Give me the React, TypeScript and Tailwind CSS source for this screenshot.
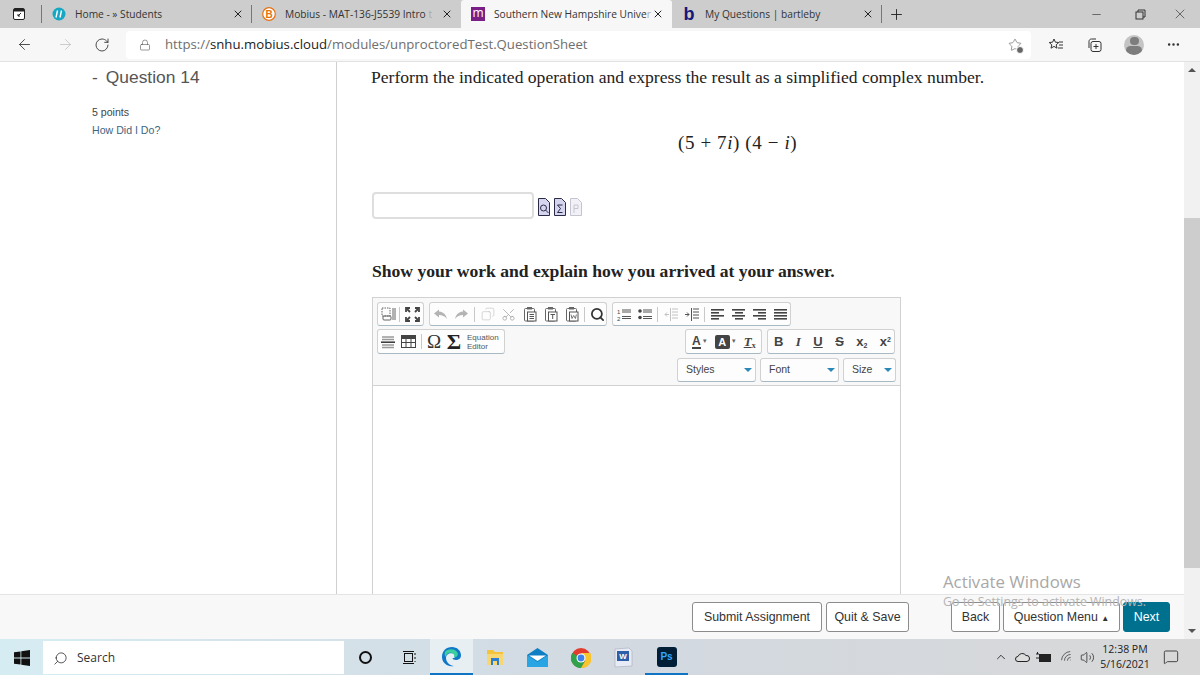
import React from "react";
import { ArrowLeft, ArrowRight, RotateCw, Lock, X, Plus, Minus, Star, MoreHorizontal, Search, Scissors, Copy, ChevronUp, Volume2, Wifi, MessageSquare } from "lucide-react";

const Tab = ({ w, icon, text, fade, active, sep }: { w: string; icon: React.ReactNode; text: string; fade?: string; active?: boolean; sep?: boolean }) => (
  <div className={`${w} h-[28px] flex items-center shrink-0 pl-[10px] pr-[8px] relative ${active ? "bg-[#f7f7f7] rounded-t-[3px]" : ""}`}>
    <span className="w-[14px] h-[14px] shrink-0 flex items-center justify-center mr-[9px]">{icon}</span>
    <span className="flex-1 whitespace-nowrap text-[10.2px] pt-[1px] text-[#333]">{text}{fade && <span className="text-[#aaa]">{fade}</span>}</span>
    <X size={12} strokeWidth={2} className="shrink-0 text-[#222]" />
    {sep && <span className="absolute right-0 top-[5px] w-px h-[18px] bg-[#777]" />}
  </div>
);

const Group = ({ w, tight, children }: { w: string; tight?: boolean; children: React.ReactNode }) => (
  <div className={`${w} ${tight ? "px-0" : "px-[3px]"} bg-[#fdfdfd] border border-[#d1d1d1] border-b-[#a9b9c4] rounded-[3px] flex items-center shrink-0`}>{children}</div>
);
const Sep = () => <span className="w-px h-[15px] bg-[#c8c8c8] mx-[2px] shrink-0" />;
const Cell = ({ children, w = "w-[21px]" }: { children: React.ReactNode; w?: string }) => (
  <span className={`${w} h-[20px] flex items-center justify-center shrink-0`}>{children}</span>
);
const Lines = ({ rows, c = "#444" }: { rows: [number, number][]; c?: string }) => (
  <svg width="14" height="13" viewBox="0 0 14 13">
    {rows.map(([x, w], i) => <rect key={i} x={x} y={1 + i * 3} width={w} height="1.6" fill={c} />)}
  </svg>
);
const Clip = ({ letter }: { letter?: string }) => (
  <svg width="14" height="16" viewBox="0 0 14 16" fill="none">
    <rect x="1.5" y="2.500" width="10" height="12.500" rx="1" stroke="#666" />
    <rect x="4" y="1" width="5" height="2.500" fill="#666" />
    <rect x="4.500" y="6" width="8.500" height="9" fill="#fff" stroke="#555" />
    {letter === "T" && <path d="M6.500 8.500h4.500M8.700 8.500v4.500" stroke="#555" />}
    {letter === "W" && <path d="M6 8.500l1 4 1.700-3 1.700 3 1-4" stroke="#555" strokeWidth=".8" />}
    {!letter && <path d="M6.500 8.500h4.500M6.500 10.500h4.500M6.500 12.500h4.500" stroke="#555" />}
  </svg>
);
const Dropdown = ({ w, label }: { w: string; label: string }) => (
  <div className={`${w} h-[24px] bg-[#fdfdfd] border border-[#d1d1d1] border-b-[#a9b9c4] rounded-[3px] flex items-center justify-between pl-[8px] pr-[3px] text-[10.5px] text-[#444] shrink-0`}>
    <span>{label}</span>
    <span className="w-0 h-0 border-l-[4px] border-r-[4px] border-t-[4px] border-l-transparent border-r-transparent border-t-[#2a87b8]" />
  </div>
);
const DocIcon = ({ children, faded }: { children: React.ReactNode; faded?: boolean }) => (
  <svg width="12" height="18" viewBox="0 0 12 18">
    <path d="M.5.500h7l4 4v13H.500z" fill={faded ? "#f1f1f7" : "#d5d5f0"} stroke={faded ? "#c5c5cf" : "#2b2b46"} />
    {children}
  </svg>
);
const Btn = ({ w, children, primary }: { w: string; children: React.ReactNode; primary?: boolean }) => (
  <button className={`${w} h-[30px] rounded-[3px] text-[12.4px] shrink-0 border ${primary ? "bg-[#00708f] border-[#00708f] text-white" : "bg-white border-[#8c8c8c] text-[#333]"}`}>{children}</button>
);
const Slot = ({ children, active, line }: { children: React.ReactNode; active?: boolean; line?: boolean }) => (
  <div className={`w-[43px] h-full shrink-0 flex items-center justify-center pt-[1px] ${active ? "bg-[#e8eff3]" : ""} ${line || active ? "border-b-[2px] border-[#0f74c4]" : ""}`}>{children}</div>
);

export default function App() {
  return (
    <div className="w-[1200px] h-[675px] overflow-hidden relative flex flex-col bg-white font-['Open_Sans',sans-serif]">
      {/* tabs */}
      <div className="h-[28px] bg-[#cdcdcd] flex items-center shrink-0">
        <div className="w-[42px] h-full flex items-center justify-center relative shrink-0">
          <svg width="12" height="12" viewBox="0 0 12 12" className="ml-[-4px]"><rect x=".5" y=".5" width="11" height="11" rx="1.5" fill="#fff" stroke="#222" /><rect x="1" y="1" width="10" height="2.5" fill="#222" /><path d="M8 5L5 8M5 6v2h2" stroke="#222" fill="none" /></svg>
          <span className="absolute right-0 top-[5px] w-px h-[18px] bg-[#777]" />
        </div>
        <Tab w="w-[210px]" sep text="Home - » Students" icon={<svg width="14" height="14" viewBox="0 0 14 14"><circle cx="7" cy="7" r="6.5" fill="#15a7c4" /><path d="M5.500 3.500L4 10.500M9.500 3.500L8 10.500" stroke="#fff" strokeWidth="1.4" /></svg>} />
        <Tab w="w-[209px]" text="Mobius - MAT-136-J5539 Intro " fade="t" icon={<svg width="14" height="14" viewBox="0 0 14 14"><circle cx="7" cy="7" r="6.3" fill="#fff" stroke="#e8710f" strokeWidth="1.2" /><text x="7" y="10.5" textAnchor="middle" fontSize="10" fill="#e8710f" fontFamily="Liberation Sans" fontWeight="700">B</text></svg>} />
        <Tab w="w-[211px]" active text="Southern New Hampshire Unive" fade="r" icon={<span className="w-[14px] h-[14px] bg-[#7a1f86] text-white text-[12px] leading-[11px] text-center">m</span>} />
        <Tab w="w-[210px]" sep text="My Questions | bartleby" icon={<span className="font-['Liberation_Sans'] font-bold text-[18px] leading-none text-[#17177a]">b</span>} />
        <Plus size={17} strokeWidth={1.3} className="ml-[6px] text-[#222]" />
        <div className="ml-auto flex items-center text-[#333]">
          <Minus size={13} strokeWidth={1.2} className="mr-[32px]" />
          <svg width="11" height="11" viewBox="0 0 11 11" fill="none" stroke="#333" className="mr-[26px]"><rect x="1" y="3" width="7" height="7" /><path d="M3 3V1h7v7H8" /></svg>
          <X size={16} strokeWidth={1} className="mr-[12px]" />
        </div>
      </div>
      {/* address */}
      <div className="h-[34px] bg-[#f7f7f7] border-b-[1px] border-[#e2e2e2] flex items-center shrink-0 text-[#333]">
        <ArrowLeft size={17} strokeWidth={1.2} className="ml-[16px]" />
        <ArrowRight size={17} strokeWidth={1.2} className="ml-[24px] text-[#c4c4c4]" />
        <RotateCw size={16} strokeWidth={1.3} className="ml-[20px]" />
        <div className="ml-[16px] w-[905px] h-[28px] bg-white rounded-[4px] flex items-center shrink-0">
          <Lock size={12} strokeWidth={1.2} className="ml-[13px] text-[#555]" />
          <span className="ml-[14px] text-[13.2px] pt-[1px] text-[#6e6e6e] whitespace-nowrap">https://<span className="text-[#222]">snhu.mobius.cloud</span>/modules/unproctoredTest.QuestionSheet</span>
          <span className="ml-auto mr-[9px] relative flex">
            <Star size={14} strokeWidth={1} className="text-[#555]" />
            <span className="absolute -right-[2px] -bottom-[2px] w-[8px] h-[8px] rounded-full bg-[#666] border border-white" />
          </span>
        </div>
        <svg width="16" height="16" viewBox="0 0 16 16" fill="none" stroke="#333" className="ml-[17px]"><path d="M6 2l1.4 3.2 3.4.3-2.6 2.3.8 3.4L6 9.4 3 11.2l.8-3.4L1.2 5.5l3.4-.3z" /><path d="M11 5h4M11 8h4M10 11h5" /></svg>
        <svg width="16" height="16" viewBox="0 0 16 16" fill="none" stroke="#333" className="ml-[23px]"><path d="M2 11V4.5C2 3 3 2 4.5 2H9" /><rect x="4" y="4.5" width="10" height="10" rx="2" /><path d="M9 7v5M6.5 9.5h5" /></svg>
        <span className="ml-[21px] w-[20px] h-[20px] rounded-full bg-[#c4c4c4] overflow-hidden flex flex-col items-center shrink-0">
          <span className="w-[9px] h-[9px] rounded-full bg-[#7d7d7d] mt-[2px]" />
          <span className="w-[16px] h-[10px] rounded-full bg-[#7d7d7d] mt-[1px]" />
        </span>
        <MoreHorizontal size={15} strokeWidth={2} className="ml-[22px]" />
      </div>
      {/* page */}
      <div className="flex-1 min-h-0 flex">
        <div className="w-[1184px] shrink-0 flex flex-col min-h-0">
          <div className="flex-1 min-h-0 flex overflow-hidden">
            <div className="w-[337px] shrink-0 border-r border-[#cfcfcf] font-['Liberation_Sans',sans-serif] pl-[92px]">
              <div className="text-[17.4px] text-[#555] mt-[4px] leading-[22px] flex">
                <span>-</span><span className="ml-[8px]">Question 14</span>
              </div>
              <div className="text-[10.6px] text-[#444] mt-[18px] leading-[13px]">5 points</div>
              <div className="text-[10.6px] text-[#41657f] mt-[5px] leading-[13px]">How Did I Do?</div>
            </div>
            <div className="flex-1 pl-[35px] font-['Liberation_Serif',serif]">
              <div className="text-[17.6px] text-[#222] mt-[4px] -ml-[1px] leading-[22px] whitespace-nowrap">Perform the indicated operation and express the result as a simplified complex number.</div>
              <div className="ml-[306px] mt-[43px] text-[19px] tracking-[0.6px] text-[#222] leading-[24px] whitespace-nowrap">(5 + 7<i>i</i>) (4 − <i>i</i>)</div>
              <div className="mt-[36px] flex items-center h-[28px]">
                <div className="w-[162px] h-[27px] border-2 border-[#dedede] rounded-[4px] bg-white shrink-0" />
                <div className="flex gap-[4px] ml-[4px] mt-[3px]">
                  <DocIcon><circle cx="5.500" cy="10" r="3" fill="none" stroke="#2b2b46" /><path d="M7.500 12l3 3" stroke="#2b2b46" /></DocIcon>
                  <DocIcon><path d="M8.500 7H3.500l3 3.500-3 4h5" fill="none" stroke="#2b2b46" /></DocIcon>
                  <DocIcon faded><path d="M4 7h4v3.500H4M4 7v8" fill="none" stroke="#c5c5cf" /></DocIcon>
                </div>
              </div>
              <div className="mt-[41px] text-[17.6px] font-bold text-[#222] leading-[22px] whitespace-nowrap">Show your work and explain how you arrived at your answer.</div>
              <div className="mt-[15px] w-[529px] h-[400px] border-[1.5px] border-[#d1d1d1] font-['Liberation_Sans',sans-serif]">
                <div className="h-[88px] bg-[#f8f8f8] border-b border-[#d1d1d1] px-[4px] pt-[4px] flex flex-col">
                  <div className="h-[24px] flex gap-[5px] shrink-0">
                    <Group w="w-[47px]">
                      <svg width="16" height="14" viewBox="0 0 16 14" fill="none" stroke="#666"><rect x="1" y="1" width="8" height="8" strokeDasharray="1.5 1" /><rect x="2" y="9" width="8" height="4" rx="1" /><path d="M12 1v12M14 1v12" /></svg>
                      <Sep />
                      <svg width="15" height="15" viewBox="0 0 15 15" stroke="#444" strokeWidth="1.8" fill="none" className="ml-[3px]"><path d="M1 5V1h4M10 1h4v4M14 10v4h-4M5 14H1v-4" /><path d="M2 2l3 3M13 2l-3 3M13 13l-3-3M2 13l3-3" /></svg>
                    </Group>
                    <Group w="w-[178px]" tight>
                      <Cell><svg width="15" height="11" viewBox="0 0 15 11"><path d="M6 .500L1 4.500l5 4V6c3.500 0 5.500 1 8 4-1-4.500-3.500-7-8-7.500z" fill="#b4b4b4" /></svg></Cell>
                      <Cell><svg width="15" height="11" viewBox="0 0 15 11"><path d="M9 .500l5 4-5 4V6C5.500 6 3.500 7 1 10c1-4.500 3.500-7 8-7.500z" fill="#b4b4b4" /></svg></Cell>
                      <Sep />
                      <Cell><Copy size={14} strokeWidth={1} className="text-[#bbb] -scale-x-100" /></Cell>
                      <Cell><Scissors size={15} strokeWidth={1.3} className="text-[#aaa] -rotate-90" /></Cell>
                      <Cell><Clip /></Cell>
                      <Cell><Clip letter="T" /></Cell>
                      <Cell><Clip letter="W" /></Cell>
                      <Sep />
                      <Cell><Search size={15} strokeWidth={2.8} className="text-[#333]" /></Cell>
                    </Group>
                    <Group w="w-[179px]" tight>
                      <Cell><svg width="14" height="13" viewBox="0 0 14 13"><text x="0" y="6" fontSize="6" fill="#444">1</text><text x="0" y="12.5" fontSize="6" fill="#444">2</text><path d="M5 2h9M5 4h9M5 8.500h9M5 10.500h9" stroke="#555" /></svg></Cell>
                      <Cell><svg width="14" height="13" viewBox="0 0 14 13"><circle cx="2" cy="3" r="1.800" fill="#444" /><circle cx="2" cy="9.500" r="1.800" fill="#444" /><path d="M5 2h9M5 4h9M5 8.500h9M5 10.500h9" stroke="#555" /></svg></Cell>
                      <Sep />
                      <Cell><svg width="14" height="13" viewBox="0 0 14 13"><path d="M1 6.500h4M3 4.500l-2 2 2 2M8 1h6M8 4h6M8 7h6M8 10h6M6.500 0v13" stroke="#c2c2c2" fill="none" /></svg></Cell>
                      <Cell><svg width="14" height="13" viewBox="0 0 14 13"><path d="M0 6.500h4M2 4.500l2 2-2 2M8 1h6M8 4h6M8 7h6M8 10h6M6.500 0v13" stroke="#555" fill="none" /></svg></Cell>
                      <Sep />
                      <Cell><Lines rows={[[0, 13], [0, 8], [0, 13], [0, 8]]} /></Cell>
                      <Cell><Lines rows={[[0, 13], [3, 8], [0, 13], [3, 8]]} /></Cell>
                      <Cell><Lines rows={[[0, 13], [5, 8], [0, 13], [5, 8]]} /></Cell>
                      <Cell><Lines rows={[[0, 13], [0, 13], [0, 13], [0, 13]]} /></Cell>
                    </Group>
                  </div>
                  <div className="h-[25px] mt-[3px] flex justify-between shrink-0 pr-[1px]">
                    <Group w="w-[128px]" tight>
                      <Cell w="w-[20px]"><svg width="14" height="14" viewBox="0 0 14 14"><path d="M1 2h12M1 4.500h12M1 10h12M1 12.500h12" stroke="#999" strokeWidth="1.500" /><path d="M0 7.200h14" stroke="#333" strokeWidth="1.500" /></svg></Cell>
                      <Cell w="w-[21px]"><svg width="15" height="13" viewBox="0 0 15 13" fill="none" stroke="#444"><rect x=".5" y=".5" width="14" height="12" /><rect x=".5" y=".5" width="14" height="3" fill="#444" /><path d="M5 3v9M10 3v9M1 7.500h13" /></svg></Cell>
                      <Sep />
                      <span className="font-['Liberation_Serif'] text-[19px] text-[#333] w-[20px] text-center leading-none">Ω</span>
                      <span className="font-['Liberation_Serif'] font-bold text-[22px] text-[#222] w-[20px] text-center leading-none">Σ</span>
                      <span className="text-[8px] text-[#555] leading-[9px] ml-[3px]">Equation<br />Editor</span>
                    </Group>
                    <div className="flex gap-[5px]">
                      <Group w="w-[77px]">
                        <span className="text-[12px] font-bold text-[#444] border-b-[2px] border-[#444] leading-[12px] ml-[3px]">A</span>
                        <span className="text-[7px] text-[#666] ml-[2px]">▾</span>
                        <span className="ml-[8px] w-[15px] h-[14px] bg-[#444] rounded-[2px] text-white text-[11px] font-bold leading-[14px] text-center">A</span>
                        <span className="text-[7px] text-[#666] ml-[2px]">▾</span>
                        <span className="ml-[8px] font-['Liberation_Serif'] italic font-bold text-[13px] text-[#444] underline leading-none">T<sub className="text-[8px] not-italic">x</sub></span>
                      </Group>
                      <Group w="w-[128px]">
                        <div className="flex w-full justify-between items-center text-[#444] font-bold text-[13px] pl-[3px]">
                          <span>B</span>
                          <span className="italic font-['Liberation_Serif']">I</span>
                          <span className="underline">U</span>
                          <span className="line-through">S</span>
                          <span>x<sub className="text-[7px]">2</sub></span>
                          <span>x<sup className="text-[7px]">2</sup></span>
                        </div>
                      </Group>
                    </div>
                  </div>
                  <div className="h-[24px] mt-[4px] flex justify-end gap-[4px] shrink-0">
                    <Dropdown w="w-[79px]" label="Styles" />
                    <Dropdown w="w-[79px]" label="Font" />
                    <Dropdown w="w-[53px]" label="Size" />
                  </div>
                </div>
              </div>
            </div>
          </div>
          <div className="h-[45px] shrink-0 bg-[#f8f8f8] border-t border-[#e4e4e4] flex items-center pl-[692px] font-['Liberation_Sans',sans-serif]">
            <Btn w="w-[130px]">Submit Assignment</Btn>
            <Btn w="w-[83px] ml-[4px]">Quit &amp; Save</Btn>
            <Btn w="w-[49px] ml-[42px]">Back</Btn>
            <Btn w="w-[117px] ml-[3px]">Question Menu <span className="text-[8px]">▲</span></Btn>
            <Btn w="w-[47px] ml-[3px]" primary>Next</Btn>
          </div>
        </div>
        {/* scrollbar */}
        <div className="w-[16px] shrink-0 bg-[#f1f1f1] flex flex-col items-center relative">
          <span className="mt-[6px] w-0 h-0 border-l-[4px] border-r-[4px] border-b-[4px] border-l-transparent border-r-transparent border-b-[#555]" />
          <span className="mt-[146px] w-full h-[350px] bg-[#cdcdcd]" />
          <span className="mt-auto mb-[6px] w-0 h-0 border-l-[4px] border-r-[4px] border-t-[4px] border-l-transparent border-r-transparent border-t-[#555]" />
        </div>
      </div>
      {/* taskbar */}
      <div className="h-[36px] shrink-0 bg-gradient-to-r from-[#d6ecf3] via-[#d2d9e1] to-[#d8d8d8] flex items-center">
        <div className="w-[43px] h-full shrink-0 flex items-center justify-center pt-[1px]">
          <svg width="16" height="16" viewBox="0 0 16 16" fill="#111"><path d="M0 2.300l6.500-.9v6.200H0zM7.300 1.300L16 0v7.600H7.300zM0 8.400h6.500v6.200L0 13.700zM7.300 8.400H16V16l-8.700-1.300z" /></svg>
        </div>
        <div className="w-[301px] h-[33px] bg-white shrink-0 flex items-center pt-[2px]">
          <Search size={15} strokeWidth={1.2} className="ml-[10px] -scale-x-100 text-[#222]" />
          <span className="ml-[9px] text-[12px] text-[#333]">Search</span>
        </div>
        <Slot><span className="w-[13px] h-[13px] rounded-full border-[2px] border-[#111]" /></Slot>
        <Slot><svg width="14" height="15" viewBox="0 0 14 15" fill="none" stroke="#111"><rect x="2.500" y="3.500" width="8" height="8" /><path d="M1 1.500h11M1 13.500h11M13 3v2M13 7v2M13 11v1" /></svg></Slot>
        <Slot active><svg width="21" height="21" viewBox="0 0 21 21"><path d="M1 11C1 5 5 1 11 1c5 0 9 3.500 9 8.500 0 3-2.500 4.500-5 4.500-2 0-3.500-1-3.500-2 3 0 3.500-2 2-3.500C11 6 5 7 5 12c0 4 4 8 8 8-6 1.500-12-3-12-9z" fill="#0f78c8" /><path d="M4 6c2-3 9-4 12 0 2 2.500 0 6-3 5 1-3-2-5-5-4-2 .6-3 2-3.500 4C3.500 9.500 3.500 7.500 4 6z" fill="#3ccf9e" /></svg></Slot>
        <Slot><svg width="18" height="17" viewBox="0 0 18 17"><path d="M1 1h6l2 2h8v13H1z" fill="#f3c33b" /><path d="M1 5h16v11H1z" fill="#f7d774" /><path d="M5 9h8v7h-2v-4H7v4H5z" fill="#2a7fd1" /></svg></Slot>
        <Slot><svg width="21" height="21" viewBox="0 0 21 21"><path d="M10.500 1L21 8v12H0V8z" fill="#0f7fc4" /><path d="M2 8.500h17L10.500 14z" fill="#fff" /><path d="M0 8l10.500 7L21 8v12H0z" fill="#2aa5e3" /></svg></Slot>
        <Slot><svg width="20" height="20" viewBox="0 0 20 20"><circle cx="10" cy="10" r="10" fill="#e33b2e" /><path d="M10 10L1.300 5A10 10 0 0 0 10 20l4-7z" fill="#2fa24a" /><path d="M10 5h9.200A10 10 0 0 1 10 20l4-7z" fill="#f8c52c" /><circle cx="10" cy="10" r="4.500" fill="#fff" /><circle cx="10" cy="10" r="3.400" fill="#3f82ee" /></svg></Slot>
        <Slot><svg width="19" height="21" viewBox="0 0 19 21"><path d="M1 2l14-1 3 3v15l-17 1z" fill="#e6ebf5" stroke="#aab" strokeWidth=".6" /><rect x="3" y="4" width="12" height="10" fill="#2d5fa8" /><text x="9" y="12" fontSize="8" fill="#fff" textAnchor="middle" fontFamily="Liberation Sans" fontWeight="700">W</text></svg></Slot>
        <Slot line><span className="w-[20px] h-[20px] rounded-[3px] bg-[#001e36] text-[#31a8ff] text-[10px] font-bold leading-[20px] text-center font-['Liberation_Sans']">Ps</span></Slot>
        <div className="ml-auto flex items-center text-[#222]">
          <ChevronUp size={14} strokeWidth={1.5} className="mr-[7px]" />
          <svg width="15" height="10" viewBox="0 0 15 10" fill="none" stroke="#222" className="mr-[6px]"><path d="M3 9.500a2.500 2.500 0 0 1 0-5 4.500 4.500 0 0 1 8-1 3 3 0 0 1 1 6z" fill="#ddd" /></svg>
          <svg width="16" height="11" viewBox="0 0 16 11" className="mr-[8px]"><rect x="3" y="2" width="12" height="8" fill="#222" /><path d="M0 2h3M0 6h3M1.500 0v2" stroke="#222" /></svg>
          <Wifi size={14} strokeWidth={1.3} className="mr-[6px] -rotate-45 text-[#444]" />
          <Volume2 size={15} strokeWidth={1.2} />
          <div className="w-[60px] text-center text-[10.5px] leading-[15px] text-[#222] whitespace-nowrap">12:38 PM<br />5/16/2021</div>
          <MessageSquare size={16} strokeWidth={1.2} className="ml-[8px] mr-[21px]" />
        </div>
      </div>
      {/* watermark */}
      <div className="absolute left-[943px] top-[571px] pointer-events-none text-[#a8a8a8] whitespace-nowrap">
        <div className="text-[16.8px] leading-[22px]">Activate Windows</div>
        <div className="text-[12.4px] leading-[16px] mt-[1px] text-[#b4b4b4]">Go to Settings to activate Windows.</div>
      </div>
    </div>
  );
}
